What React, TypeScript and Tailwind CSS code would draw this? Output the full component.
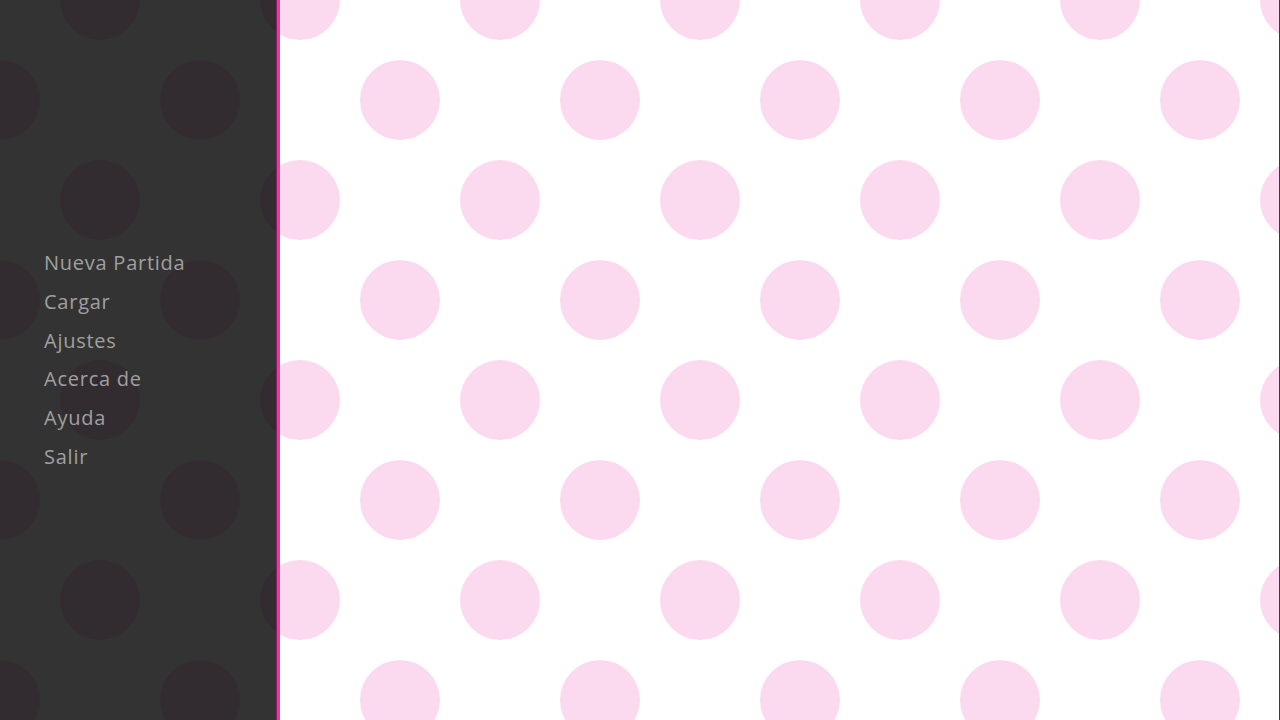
import React from "react";

const items = ["Nueva Partida", "Cargar", "Ajustes", "Acerca de", "Ayuda", "Salir"];

export default function App() {
  return (
    <div className="relative w-[1280px] h-[720px] overflow-hidden bg-white">
      <svg className="absolute inset-0" width="1280" height="720">
        <defs>
          <pattern id="dots" width="200" height="200" patternUnits="userSpaceOnUse">
            <circle cx="100" cy="0" r="40" fill="#fbdaef" />
            <circle cx="100" cy="200" r="40" fill="#fbdaef" />
            <circle cx="0" cy="100" r="40" fill="#fbdaef" />
            <circle cx="200" cy="100" r="40" fill="#fbdaef" />
          </pattern>
        </defs>
        <rect width="1280" height="720" fill="url(#dots)" />
      </svg>
      <div className="relative flex h-full">
        <div className="w-[276px] h-full bg-[rgba(0,0,0,0.8)] flex flex-col pt-[244px] pl-[44px]">
          {items.map((t) => (
            <div
              key={t}
              className="text-[20px] leading-[38.8px] text-[#a0a0a0] tracking-[0.75px]"
              style={{ fontFamily: '"Open Sans", "Noto Sans", sans-serif' }}
            >
              {t}
            </div>
          ))}
        </div>
        <div className="w-px h-full bg-[#98196a]" />
        <div className="w-[3px] h-full bg-[#e0409a]" />
        <div className="flex-1" />
        <div className="w-px h-full bg-[#3a3a3a]" />
      </div>
    </div>
  );
}
